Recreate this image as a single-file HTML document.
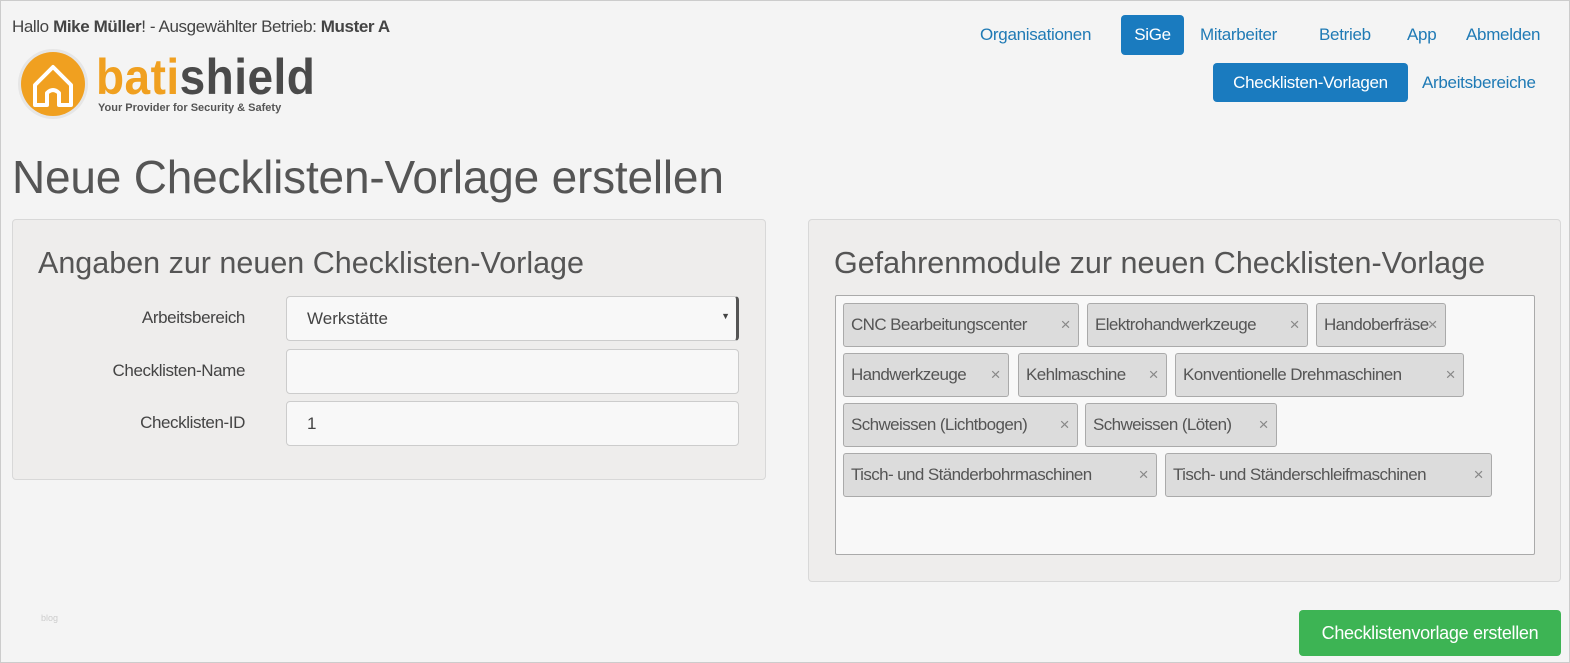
<!DOCTYPE html>
<html><head><meta charset="utf-8"><style>
*{box-sizing:border-box;margin:0;padding:0}
body{width:1570px;height:663px;background:#f4f4f4;font-family:"Liberation Sans",sans-serif;color:#444;position:relative;overflow:hidden;border:1px solid #ccc}
.a{position:absolute;white-space:nowrap}
.nav{font-size:17px;color:#1f7ab5;letter-spacing:-0.3px}
.btn{background:#1a7bbf;color:#fff;border-radius:4px;text-align:center}
.panel{position:absolute;background:#eeedec;border:1px solid #d8d8d8;border-radius:4px}
.inp{position:absolute;background:#f8f8f8;border:1px solid #ccc;border-radius:4px;font-size:17px;padding:12px 20px;color:#444;height:45px}
.lbl{position:absolute;font-size:17px;text-align:right;width:240px;letter-spacing:-0.4px}
.tag{position:absolute;height:44px;background:#dcdcdc;border:1px solid #aaa;border-radius:3px;font-size:17px;line-height:42px;padding-left:7px;color:#555;white-space:nowrap;letter-spacing:-0.6px}
.tag b{font-weight:normal;color:#888;position:absolute;right:8px}
</style></head><body>
<div class="a" style="left:11px;top:16px;font-size:17px;letter-spacing:-0.4px">Hallo <b>Mike Müller</b>! - Ausgewählter Betrieb: <b>Muster A</b></div>
<svg class="a" style="left:15px;top:46px" width="74" height="74" viewBox="0 0 74 74"><circle cx="37" cy="37" r="35" fill="#e6e6e6"/><circle cx="37" cy="37" r="32" fill="#f0a020"/><path d="M19 38 L37 20 L55 38 L55 58 L43 58 L43 46 Q37 40 31 46 L31 58 L19 58 Z" fill="none" stroke="#fff" stroke-width="4" stroke-linejoin="round"/></svg>
<div class="a" style="left:95px;top:48px;font-size:50px;font-weight:bold;letter-spacing:0.5px;line-height:56px;transform:scaleX(0.92);transform-origin:left"><span style="color:#f0a020">bati</span><span style="color:#4a4a4a">shield</span></div>
<div class="a" style="left:97px;top:101px;font-size:11px;font-weight:bold;color:#555">Your Provider for Security &amp; Safety</div>
<div class="a nav" style="left:979px;top:24px">Organisationen</div>
<div class="a nav btn" style="left:1120px;top:14px;width:63px;height:40px;line-height:40px">SiGe</div>
<div class="a nav" style="left:1199px;top:24px">Mitarbeiter</div>
<div class="a nav" style="left:1318px;top:24px">Betrieb</div>
<div class="a nav" style="left:1406px;top:24px">App</div>
<div class="a nav" style="left:1465px;top:24px">Abmelden</div>
<div class="a nav btn" style="left:1212px;top:62px;width:195px;height:39px;line-height:39px">Checklisten-Vorlagen</div>
<div class="a nav" style="left:1421px;top:72px">Arbeitsbereiche</div>
<div class="a" style="left:11px;top:149px;font-size:46px;color:#555;letter-spacing:-0.2px">Neue Checklisten-Vorlage erstellen</div>
<div class="panel" style="left:11px;top:218px;width:754px;height:261px"></div>
<div class="a" style="left:37px;top:245px;font-size:30.5px;color:#555;letter-spacing:0px">Angaben zur neuen Checklisten-Vorlage</div>
<div class="lbl" style="left:4px;top:307px">Arbeitsbereich</div>
<div class="lbl" style="left:4px;top:360px">Checklisten-Name</div>
<div class="lbl" style="left:4px;top:412px">Checklisten-ID</div>
<div class="inp" style="left:285px;top:295px;width:453px;border-right:3px solid #555">Werkstätte<span style="position:absolute;right:6px;top:14px;font-size:9px">▼</span></div>
<div class="inp" style="left:285px;top:348px;width:453px"></div>
<div class="inp" style="left:285px;top:400px;width:453px">1</div>
<div class="panel" style="left:807px;top:218px;width:753px;height:363px"></div>
<div class="a" style="left:833px;top:245px;font-size:30.5px;color:#555;letter-spacing:0px">Gefahrenmodule zur neuen Checklisten-Vorlage</div>
<div class="a" style="left:834px;top:294px;width:700px;height:260px;background:#f8f8f8;border:1px solid #aaa;border-radius:2px"></div>
<div class="tag" style="left:842px;top:302px;width:236px">CNC Bearbeitungscenter<b>×</b></div>
<div class="tag" style="left:1086px;top:302px;width:221px">Elektrohandwerkzeuge<b>×</b></div>
<div class="tag" style="left:1315px;top:302px;width:130px">Handoberfräse<b>×</b></div>
<div class="tag" style="left:842px;top:352px;width:166px">Handwerkzeuge<b>×</b></div>
<div class="tag" style="left:1017px;top:352px;width:149px">Kehlmaschine<b>×</b></div>
<div class="tag" style="left:1174px;top:352px;width:289px">Konventionelle Drehmaschinen<b>×</b></div>
<div class="tag" style="left:842px;top:402px;width:235px">Schweissen (Lichtbogen)<b>×</b></div>
<div class="tag" style="left:1084px;top:402px;width:192px">Schweissen (Löten)<b>×</b></div>
<div class="tag" style="left:842px;top:452px;width:314px">Tisch- und Ständerbohrmaschinen<b>×</b></div>
<div class="tag" style="left:1164px;top:452px;width:327px">Tisch- und Ständerschleifmaschinen<b>×</b></div>
<div class="a" style="left:40px;top:612px;font-size:9px;color:#ccc">blog</div>
<div class="a" style="left:1298px;top:609px;width:262px;height:46px;line-height:46px;background:#3db454;color:#fff;border-radius:4px;text-align:center;font-size:18px;letter-spacing:-0.3px">Checklistenvorlage erstellen</div>
</body></html>
